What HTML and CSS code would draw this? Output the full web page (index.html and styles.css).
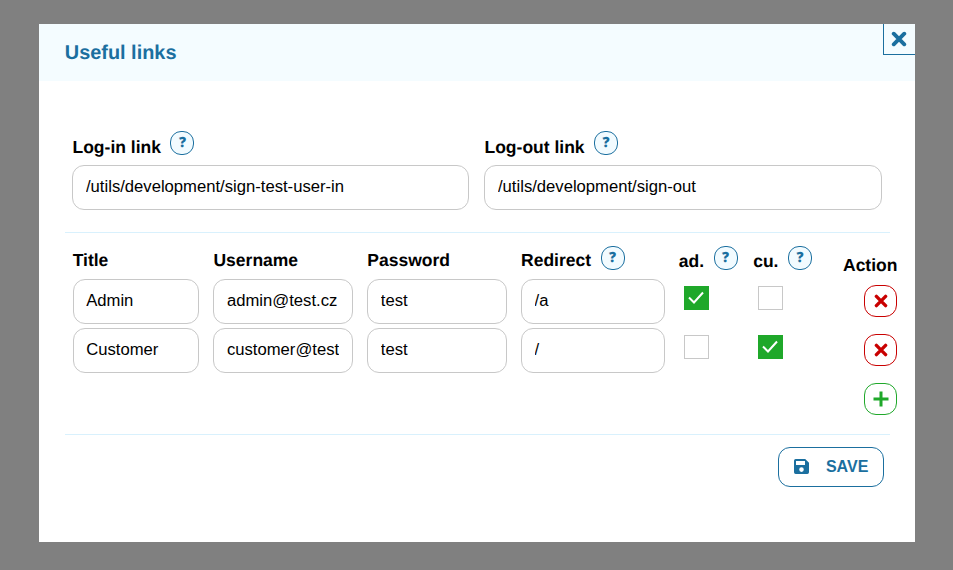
FILE: index.html
```html
<!DOCTYPE html>
<html lang="en">
<head>
<meta charset="utf-8">
<title>Useful links</title>
<link rel="stylesheet" href="styles.css">
</head>
<body>
<svg class="defs" aria-hidden="true">
  <symbol id="cross" viewBox="0 0 14 14"><path d="M2.4 2.4l9.2 9.2M11.6 2.4l-9.2 9.2" fill="none" stroke="currentColor" stroke-width="3.4" stroke-linecap="round"/></symbol>
  <symbol id="check" viewBox="0 0 24 24"><path d="M5 11.5l5 5L19 6.500" fill="none" stroke="#fff" stroke-width="2"/></symbol>
</svg>
<main class="modal">
  <header class="modal-header">
    <h1>Useful links</h1>
    <button class="close" aria-label="Close"><svg width="16" height="16"><use href="#cross"/></svg></button>
  </header>
  <form class="modal-body">
    <section class="links">
      <div class="field"><div class="label">Log-in link <span class="help">?</span></div><input type="text" value="/utils/development/sign-test-user-in"></div>
      <div class="field"><div class="label">Log-out link <span class="help">?</span></div><input type="text" value="/utils/development/sign-out"></div>
    </section>
    <section class="users">
      <div class="row head">
        <div class="label plain">Title</div>
        <div class="label plain">Username</div>
        <div class="label plain">Password</div>
        <div class="label">Redirect <span class="help">?</span></div>
        <div class="label">ad. <span class="help">?</span></div>
        <div class="label">cu. <span class="help">?</span></div>
        <div class="label action">Action</div>
      </div>
      <div class="row">
        <input type="text" value="Admin">
        <input type="text" value="admin@test.cz">
        <input type="text" value="test">
        <input type="text" value="/a">
        <span class="box on"><svg width="24" height="24"><use href="#check"/></svg></span>
        <span class="box"></span>
        <button type="button" class="round remove" aria-label="Remove"><svg width="14" height="14"><use href="#cross"/></svg></button>
      </div>
      <div class="row">
        <input type="text" value="Customer">
        <input type="text" value="customer@test.cz">
        <input type="text" value="test">
        <input type="text" value="/">
        <span class="box"></span>
        <span class="box on"><svg width="24" height="24"><use href="#check"/></svg></span>
        <button type="button" class="round remove" aria-label="Remove"><svg width="14" height="14"><use href="#cross"/></svg></button>
      </div>
      <div class="row add-row">
        <button type="button" class="round add" aria-label="Add"><svg width="16" height="16" viewBox="0 0 16 16"><path d="M8 .5v15M.5 8h15" stroke="currentColor" stroke-width="3"/></svg></button>
      </div>
    </section>
    <footer>
      <button type="button" class="save"><svg width="15" height="15" viewBox="0 0 15 15"><path fill="currentColor" fill-rule="evenodd" d="M1.7 0h9.5L15 3.8v9.5q0 1.7-1.7 1.7H1.7Q0 15 0 13.3V1.7Q0 0 1.7 0zM2 2v4h9V2zM7.5 8.3a2.3 2.3 0 1 0 0 4.6 2.3 2.3 0 1 0 0-4.6z"/></svg><span>SAVE</span></button>
    </footer>
  </form>
</main>
</body>
</html>
```
FILE: styles.css
```css
* { box-sizing: border-box; }
body {
  margin: 0;
  height: 570px;
  padding: 23.6px 38.4px 28px 39.3px;
  background: #808080;
  color: #000;
  font-family: "Liberation Sans", Arial, sans-serif;
  font-size: 16.65px;
  text-rendering: geometricPrecision;
  overflow: hidden;
}
.defs { position: absolute; width: 0; height: 0; }
button, input { font: inherit; color: inherit; background: none; margin: 0; }
svg { display: block; }
.modal { height: 518.4px; background: #fff; }
.modal-header {
  display: flex;
  justify-content: space-between;
  height: 57px;
  background: #f4fcff;
  color: #1b6f9f;
}
h1 { margin: 0; padding-left: 25.5px; font-size: 19.9px; line-height: 58px; }
.close {
  display: grid;
  place-items: center;
  width: 32px;
  height: 31px;
  padding: 0;
  border: solid #1b6f9f;
  border-width: 0 0 1px 1px;
}
.modal-body { padding: 0 24.7px 0 25.7px; }
.links {
  display: grid;
  grid-template-columns: 397px 398px;
  gap: 15px;
  padding: 50px 0 0 7.5px;
  height: 152px;
  border-bottom: 1px solid #d9f1fd;
}
.label { display: flex; align-items: flex-start; gap: 9.5px; height: 34px; font-size: 17.5px; font-weight: bold; line-height: 32px; white-space: nowrap; }
.help {
  width: 24px;
  height: 24px;
  border: 1px solid #1b6f9f;
  border-radius: 11px;
  background: #f2fbff;
  color: #1b6f9f;
  font: 800 14px/22px "Open Sans", sans-serif;
  text-align: center;
}
input {
  display: block;
  width: 100%;
  height: 45px;
  padding: 0 12.5px 1px;
  border: 1px solid #c8c8c8;
  border-radius: 12px;
}
.users { height: 202px; padding: 13px 0 0 7.7px; border-bottom: 1px solid #d9f1fd; }
.users input { padding-bottom: 0; }
.row {
  display: grid;
  grid-template-columns: 126.5px 139.5px 139.5px 143.5px 60px 91px 39px;
  column-gap: 14.3px;
  height: 49px;
  align-items: start;
}
.row.head { height: 33px; }
.plain { line-height: 28px; }
.row.head .label:nth-child(4) { line-height: 29px; }
.row.head .label:nth-child(5), .row.head .label:nth-child(6) { line-height: 30px; }
.action { justify-content: flex-end; line-height: 38px; }
.box { width: 25px; height: 24px; margin: 7px 0 0 5px; border: 1px solid #c8c8c8; }
.box.on { border: 0; background: #1fa82a; }
.round {
  display: grid;
  place-items: center;
  justify-self: end;
  width: 33px;
  height: 32px;
  margin-top: 6px;
  padding: 0;
  border: 1px solid;
  border-radius: 12px;
}
.remove { color: #c90000; }
.add { grid-column: 7; color: #1fa82a; }
footer { display: flex; justify-content: flex-end; padding: 12px 5.5px 0 0; }
.save {
  display: flex;
  align-items: center;
  gap: 17px;
  width: 106px;
  height: 40px;
  padding: 0 0 0 14.5px;
  border: 1px solid #1b6f9f;
  border-radius: 12px;
  color: #1b6f9f;
  font-size: 16px;
  font-weight: bold;
}
```
